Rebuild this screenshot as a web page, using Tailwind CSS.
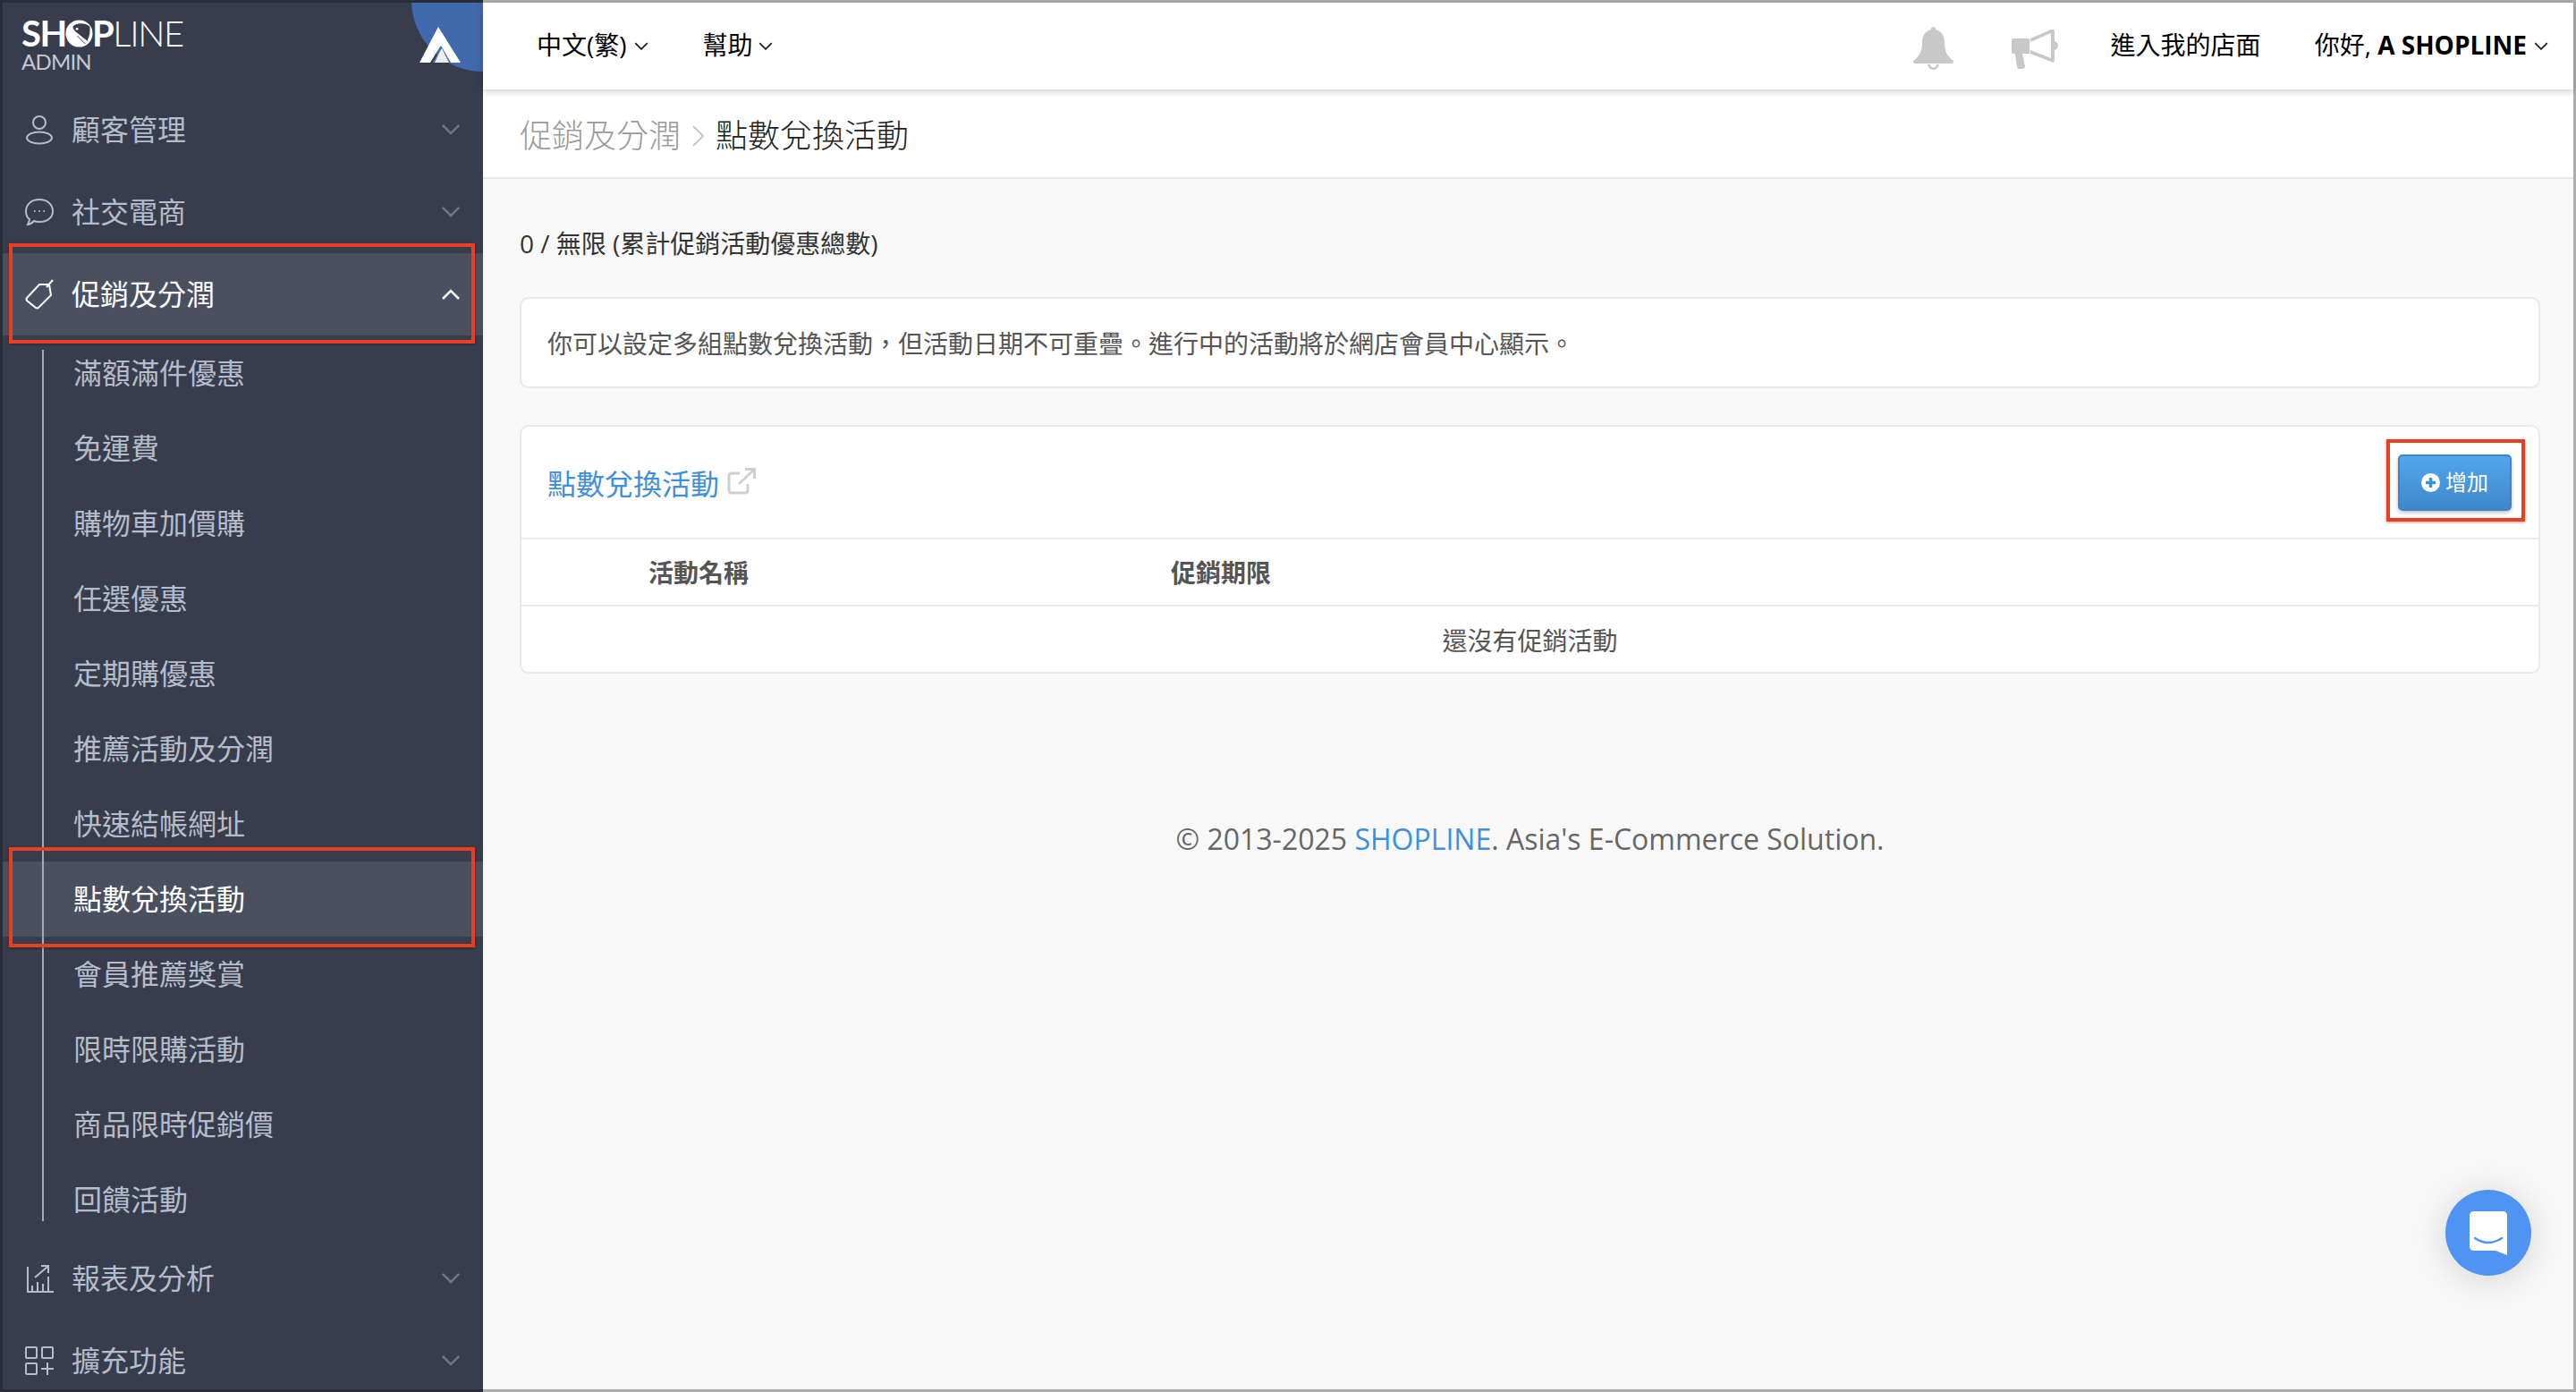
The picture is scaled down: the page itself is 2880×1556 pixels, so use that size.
<!DOCTYPE html>
<html lang="zh-Hant">
<head>
  <meta charset="UTF-8">
  <title>點數兌換活動</title>
  <script src="https://cdn.jsdelivr.net/npm/@tailwindcss/browser@4"></script>
</head>
<body class="font-['Open_Sans','Noto_Sans_CJK_TC',sans-serif]">
  <div class="relative flex w-[2880px] h-[1556px] overflow-hidden bg-[#f8f8f8]">

    <!-- sidebar -->
    <aside class="w-[540px] shrink-0 h-full overflow-hidden bg-[#383d4d] border-l-[3px] border-y-[3px] border-[#2a2d39] text-[#b6bcc9] text-[32px]">
      <div class="relative h-[96px] overflow-hidden">
        <div class="absolute right-[-80px] top-[-83px] w-[160px] h-[160px] rounded-full bg-[#4169ae]"></div>
        <div class="absolute left-[21px] top-[14px] text-white">
          <div class="flex items-center h-[40px] text-[40px] leading-[40px] font-['Lato',sans-serif] tracking-[-1.4px]">
            <span class="font-bold">SH</span>
            <svg class="w-[31px] h-[31px] mx-[-1px]" viewBox="0 0 33 33"><circle cx="16.500" cy="16.500" r="16" fill="#fff"/><path d="M9 8 C14 3 24 4 29 8 C30 14 29 20 26 25 L12 14 C10 12 9 10 9 8Z" fill="#383d4d"/><circle cx="14" cy="11" r="1.500" fill="#fff"/><path d="M14 19 L24 29 M17 17 L27 25" stroke="#383d4d" stroke-width="1"/></svg>
            <span class="font-bold">P</span>
            <span class="font-light">LINE</span>
          </div>
          <div class="text-[24px] leading-[24px] text-[#c5c9d2] font-['Lato',sans-serif] tracking-[-0.8px]">ADMIN</div>
        </div>
        <svg class="absolute left-[466px] top-[27px] w-[46px] h-[40px]" viewBox="0 0 46 40"><path d="M21 0 L46 40 H35 L24 21 L18 30 L12 40 H0Z" fill="#fff"/><path d="M25 24 L33 40 H15Z" fill="#fff" opacity=".9"/><path d="M23 27 L17 40 H15Z" fill="#4169ae"/></svg>
      </div>

      <div class="flex items-center h-[92px] pl-[25px] pr-[26px]">
        <svg class="w-[32px] h-[34px] shrink-0" viewBox="0 0 32 34" fill="none" stroke="currentColor" stroke-width="2"><circle cx="16" cy="9" r="7"/><ellipse cx="16" cy="26" rx="14" ry="6.500"/></svg>
        <span class="ml-[20px] flex-1">顧客管理</span>
        <svg class="w-[20px] h-[12px]" viewBox="0 0 20 12" fill="none" stroke="#6e7484" stroke-width="2.500"><path d="M1 1 L10 10 L19 1"/></svg>
      </div>
      <div class="flex items-center h-[92px] pl-[25px] pr-[26px]">
        <svg class="w-[32px] h-[32px] shrink-0" viewBox="0 0 32 32" fill="none" stroke="currentColor" stroke-width="2"><path d="M16 2 C24 2 31 7 31 15 C31 23 24 27 16 27 C14 27 12 27 10 26 C8 28 6 30 3 30 C4 28 5 26 5 24 C2 22 1 19 1 15 C1 7 8 2 16 2Z"/><path d="M10 15h1.500M15.300 15h1.500M20.500 15h1.500" stroke-width="2"/></svg>
        <span class="ml-[20px] flex-1">社交電商</span>
        <svg class="w-[20px] h-[12px]" viewBox="0 0 20 12" fill="none" stroke="#6e7484" stroke-width="2.500"><path d="M1 1 L10 10 L19 1"/></svg>
      </div>
      <div class="flex items-center h-[92px] pl-[25px] pr-[26px] bg-[#4a5060] text-white">
        <svg class="w-[32px] h-[34px] shrink-0" viewBox="0 0 32 34" fill="none" stroke="currentColor" stroke-width="2"><path d="M2 21 L16 6 H27 L29 18 L15 32 Q13 33 12 32 L2 24 Q1 22 2 21Z"/><path d="M24 9 L31 1"/></svg>
        <span class="ml-[20px] flex-1">促銷及分潤</span>
        <svg class="w-[20px] h-[12px]" viewBox="0 0 20 12" fill="none" stroke="#fff" stroke-width="2.500"><path d="M1 11 L10 2 L19 11"/></svg>
      </div>

      <div class="relative">
        <div class="absolute left-[44px] top-[16px] bottom-[18px] w-[2px] bg-[#a7abb6]"></div>
        <div class="flex items-center h-[84px] pl-[79px] pb-[1px]">滿額滿件優惠</div>
        <div class="flex items-center h-[84px] pl-[79px] pb-[1px]">免運費</div>
        <div class="flex items-center h-[84px] pl-[79px] pb-[1px]">購物車加價購</div>
        <div class="flex items-center h-[84px] pl-[79px] pb-[1px]">任選優惠</div>
        <div class="flex items-center h-[84px] pl-[79px] pb-[1px]">定期購優惠</div>
        <div class="flex items-center h-[84px] pl-[79px] pb-[1px]">推薦活動及分潤</div>
        <div class="flex items-center h-[84px] pl-[79px] pb-[1px]">快速結帳網址</div>
        <div class="flex items-center h-[84px] pl-[79px] pb-[1px] bg-[#4a5060] text-white">點數兌換活動</div>
        <div class="flex items-center h-[84px] pl-[79px] pb-[1px]">會員推薦獎賞</div>
        <div class="flex items-center h-[84px] pl-[79px] pb-[1px]">限時限購活動</div>
        <div class="flex items-center h-[84px] pl-[79px] pb-[1px]">商品限時促銷價</div>
        <div class="flex items-center h-[84px] pl-[79px] pb-[1px]">回饋活動</div>
      </div>

      <div class="flex items-center h-[92px] pl-[25px] pr-[26px]">
        <svg class="w-[32px] h-[32px] shrink-0" viewBox="0 0 32 32" fill="none" stroke="currentColor" stroke-width="2"><path d="M3 3 V31 H32"/><path d="M8 30 V24 M14 30 V20 M20 30 V22 M26 30 V14"/><path d="M11 15 L25 3 M18 2 H26 V10"/></svg>
        <span class="ml-[20px] flex-1">報表及分析</span>
        <svg class="w-[20px] h-[12px]" viewBox="0 0 20 12" fill="none" stroke="#6e7484" stroke-width="2.500"><path d="M1 1 L10 10 L19 1"/></svg>
      </div>
      <div class="flex items-center h-[92px] pl-[25px] pr-[26px]">
        <svg class="w-[32px] h-[32px] shrink-0" viewBox="0 0 32 32" fill="none" stroke="currentColor" stroke-width="2"><rect x="1" y="1" width="12" height="12" rx="1"/><rect x="19" y="1" width="12" height="12" rx="1"/><rect x="1" y="19" width="12" height="12" rx="1"/><path d="M18 25 H32 M25 18 V32"/></svg>
        <span class="ml-[20px] flex-1">擴充功能</span>
        <svg class="w-[20px] h-[12px]" viewBox="0 0 20 12" fill="none" stroke="#6e7484" stroke-width="2.500"><path d="M1 1 L10 10 L19 1"/></svg>
      </div>
    </aside>

    <!-- main -->
    <main class="relative flex-1 min-w-0 flex flex-col border-y-[3px] border-r-[3px] border-[#adadad]">
      <header class="relative z-10 flex items-center h-[97px] bg-white shadow-[0_2px_8px_rgba(0,0,0,0.22)] text-[28px] text-black">
        <span class="ml-[60px] mb-[3px]">中文(繁)</span>
        <svg class="ml-[8px] w-[16px] h-[9px]" viewBox="0 0 14 8" fill="none" stroke="#222" stroke-width="1.600"><path d="M1 1 L7 7 L13 1"/></svg>
        <span class="ml-[61px] mb-[3px]">幫助</span>
        <svg class="ml-[6px] w-[16px] h-[9px]" viewBox="0 0 14 8" fill="none" stroke="#222" stroke-width="1.600"><path d="M1 1 L7 7 L13 1"/></svg>
        <div class="flex-1"></div>
        <svg class="mt-[5px] w-[45px] h-[48px]" viewBox="0 0 45 48" fill="#c8c8c8"><path d="M22.500 0 C24.500 0 25.500 1.500 25 3 C32 5 35 10 35 18 C35 28 39 34 45 38 Q45 41 43 41 H2 Q0 41 0 38 C6 34 10 28 10 18 C10 10 13 5 20 3 C19.500 1.500 20.500 0 22.500 0Z"/><path d="M16 42 C17 46 20 48 22.500 48 C25 48 28 46 29 42 H26 C26 44 24.500 45.500 22.500 45.500 C20.500 45.500 19 44 19 42Z"/></svg>
        <svg class="ml-[65px] mt-[6px] w-[52px] h-[44px]" viewBox="0 0 52 44" fill="#c8c8c8"><path d="M0 12 Q0 10 2 10 H20 V27 H12 L15 41 Q15 44 11 44 H9 Q6 44 6 41 L4 27 H2 Q0 27 0 25Z"/><path d="M21 10 L44 0 Q48 -1 48 3 V13 Q52 15 52 18 Q52 21 48 23 V34 Q48 38 44 36 L21 27 V23 L44 32 V4 L21 14Z"/></svg>
        <span class="ml-[59px] mb-[3px]">進入我的店面</span>
        <span class="ml-[60px] mb-[3px]">你好, <b>A SHOPLINE</b></span>
        <svg class="ml-[8px] mr-[28px] w-[16px] h-[9px]" viewBox="0 0 14 8" fill="none" stroke="#222" stroke-width="1.600"><path d="M1 1 L7 7 L13 1"/></svg>
      </header>

      <div class="flex items-center h-[100px] pt-[6px] bg-white border-b-2 border-[#e8e8e8] pl-[41px] text-[36px] font-light">
        <span class="text-[#9a9a9a]">促銷及分潤</span>
        <svg class="mx-[13px] w-[13px] h-[24px]" viewBox="0 0 13 24" fill="none" stroke="#c3c7d0" stroke-width="2"><path d="M1 1 L12 12 L1 23"/></svg>
        <span class="text-[#222]">點數兌換活動</span>
      </div>

      <div class="flex-1 flex flex-col pl-[41px] pr-[37px] text-[28px]">
        <p class="mt-[53px] leading-[38px] text-[#333]">0 / 無限 (累計促銷活動優惠總數)</p>

        <div class="mt-[41px] flex items-center h-[102px] pl-[29px] pt-[2px] bg-white border-2 border-[#e9e9e9] rounded-[10px] text-[#555]">你可以設定多組點數兌換活動，但活動日期不可重疊。進行中的活動將於網店會員中心顯示。</div>

        <div class="mt-[41px] bg-white border-2 border-[#e9e9e9] rounded-[10px] text-[#555]">
          <div class="flex items-center justify-between h-[124px] pl-[29px] pr-[30px]">
            <div class="flex items-center mt-[3px]">
              <span class="text-[32px] text-[#3f8fdc]">點數兌換活動</span>
              <svg class="ml-[9px] w-[32px] h-[30px] mt-[-6px]" viewBox="0 0 32 30" fill="none" stroke="#cfcfcf" stroke-width="3"><path d="M14 6 H5 Q2 6 2 9 V25 Q2 28 5 28 H20 Q23 28 23 25 V18"/><path d="M13 18 L29 3"/><path d="M20 1.500 H30.500 V12" stroke-width="3"/></svg>
            </div>
            <button class="flex items-center justify-center w-[127px] h-[63px] rounded-[5px] border-2 border-[#3d84c4] bg-linear-to-b from-[#52a6ee] to-[#3f88c9] text-white text-[24px] shadow-[0_2px_4px_rgba(0,0,0,0.25)]">
              <svg class="w-[21px] h-[21px] mr-[6px]" viewBox="0 0 21 21"><circle cx="10.500" cy="10.500" r="10.500" fill="#fff"/><path d="M10.500 5 V16 M5 10.500 H16" stroke="#3f8fd6" stroke-width="3.500"/></svg>
              增加
            </button>
          </div>
          <div class="flex items-center h-[75px] border-t-2 border-[#e9e9e9] font-bold">
            <span class="ml-[142px] w-[584px]">活動名稱</span>
            <span>促銷期限</span>
          </div>
          <div class="flex items-center justify-center h-[75px] pt-[2px] border-t-2 border-[#e9e9e9]">還沒有促銷活動</div>
        </div>

        <p class="mt-[162px] text-center text-[32px] leading-[46px] text-[#666]">© 2013-2025 <span class="text-[#3f8fdc]">SHOPLINE</span>. Asia's E-Commerce Solution.</p>
      </div>
    </main>

    <!-- chat launcher -->
    <div class="absolute left-[2734px] top-[1330px] flex items-center justify-center w-[96px] h-[96px] rounded-full bg-[#4f94f3] shadow-[0_4px_40px_rgba(0,0,0,0.15)]">
      <svg class="w-[42px] h-[49px]" viewBox="0 0 42 49"><path d="M5 0 H37 Q42 0 42 5 V49 L29 44 H5 Q0 44 0 39 V5 Q0 0 5 0Z" fill="#fff"/><path d="M6 30 Q21 40 36 30" fill="none" stroke="#4f94f3" stroke-width="2.500" stroke-linecap="round"/></svg>
    </div>

    <!-- annotation boxes -->
    <div class="absolute left-[10px] top-[272px] w-[521px] h-[112px] border-4 border-[#e8401f] shadow-[0_1px_3px_rgba(0,0,0,0.35)]"></div>
    <div class="absolute left-[10px] top-[947px] w-[521px] h-[112px] border-4 border-[#e8401f] shadow-[0_1px_3px_rgba(0,0,0,0.35)]"></div>
    <div class="absolute left-[2668px] top-[491px] w-[155px] h-[92px] border-4 border-[#e8401f] shadow-[0_1px_3px_rgba(0,0,0,0.35)]"></div>
  </div>
</body>
</html>
